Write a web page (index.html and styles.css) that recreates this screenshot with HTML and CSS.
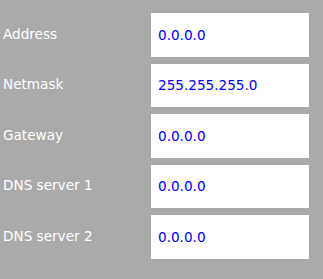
FILE: index.html
```html
<!DOCTYPE html>
<html>
<head>
<meta charset="utf-8">
<link rel="stylesheet" href="styles.css">
</head>
<body>
<div class="form">
  <div class="label">Address</div><div class="field">0.0.0.0</div>
  <div class="label">Netmask</div><div class="field">255.255.255.0</div>
  <div class="label">Gateway</div><div class="field">0.0.0.0</div>
  <div class="label">DNS server 1</div><div class="field">0.0.0.0</div>
  <div class="label">DNS server 2</div><div class="field">0.0.0.0</div>
</div>
</body>
</html>
```
FILE: styles.css
```css
html, body {
  margin: 0;
  padding: 0;
  background: #aaaaaa;
}
body {
  width: 323px;
  height: 279px;
  overflow: hidden;
  font-family: "DejaVu Sans", Verdana, sans-serif;
  font-size: 13.6px;
}
.form {
  display: grid;
  grid-template-columns: 151px 158px;
  grid-auto-rows: 43.5px;
  row-gap: 7px;
  padding-top: 13px;
}
.label {
  display: flex;
  align-items: center;
  padding-left: 3px;
  color: #ffffff;
  padding-bottom: 2px;
}
.field {
  display: flex;
  align-items: center;
  background: #ffffff;
  color: #0000ff;
  padding-left: 7px;
}
```
